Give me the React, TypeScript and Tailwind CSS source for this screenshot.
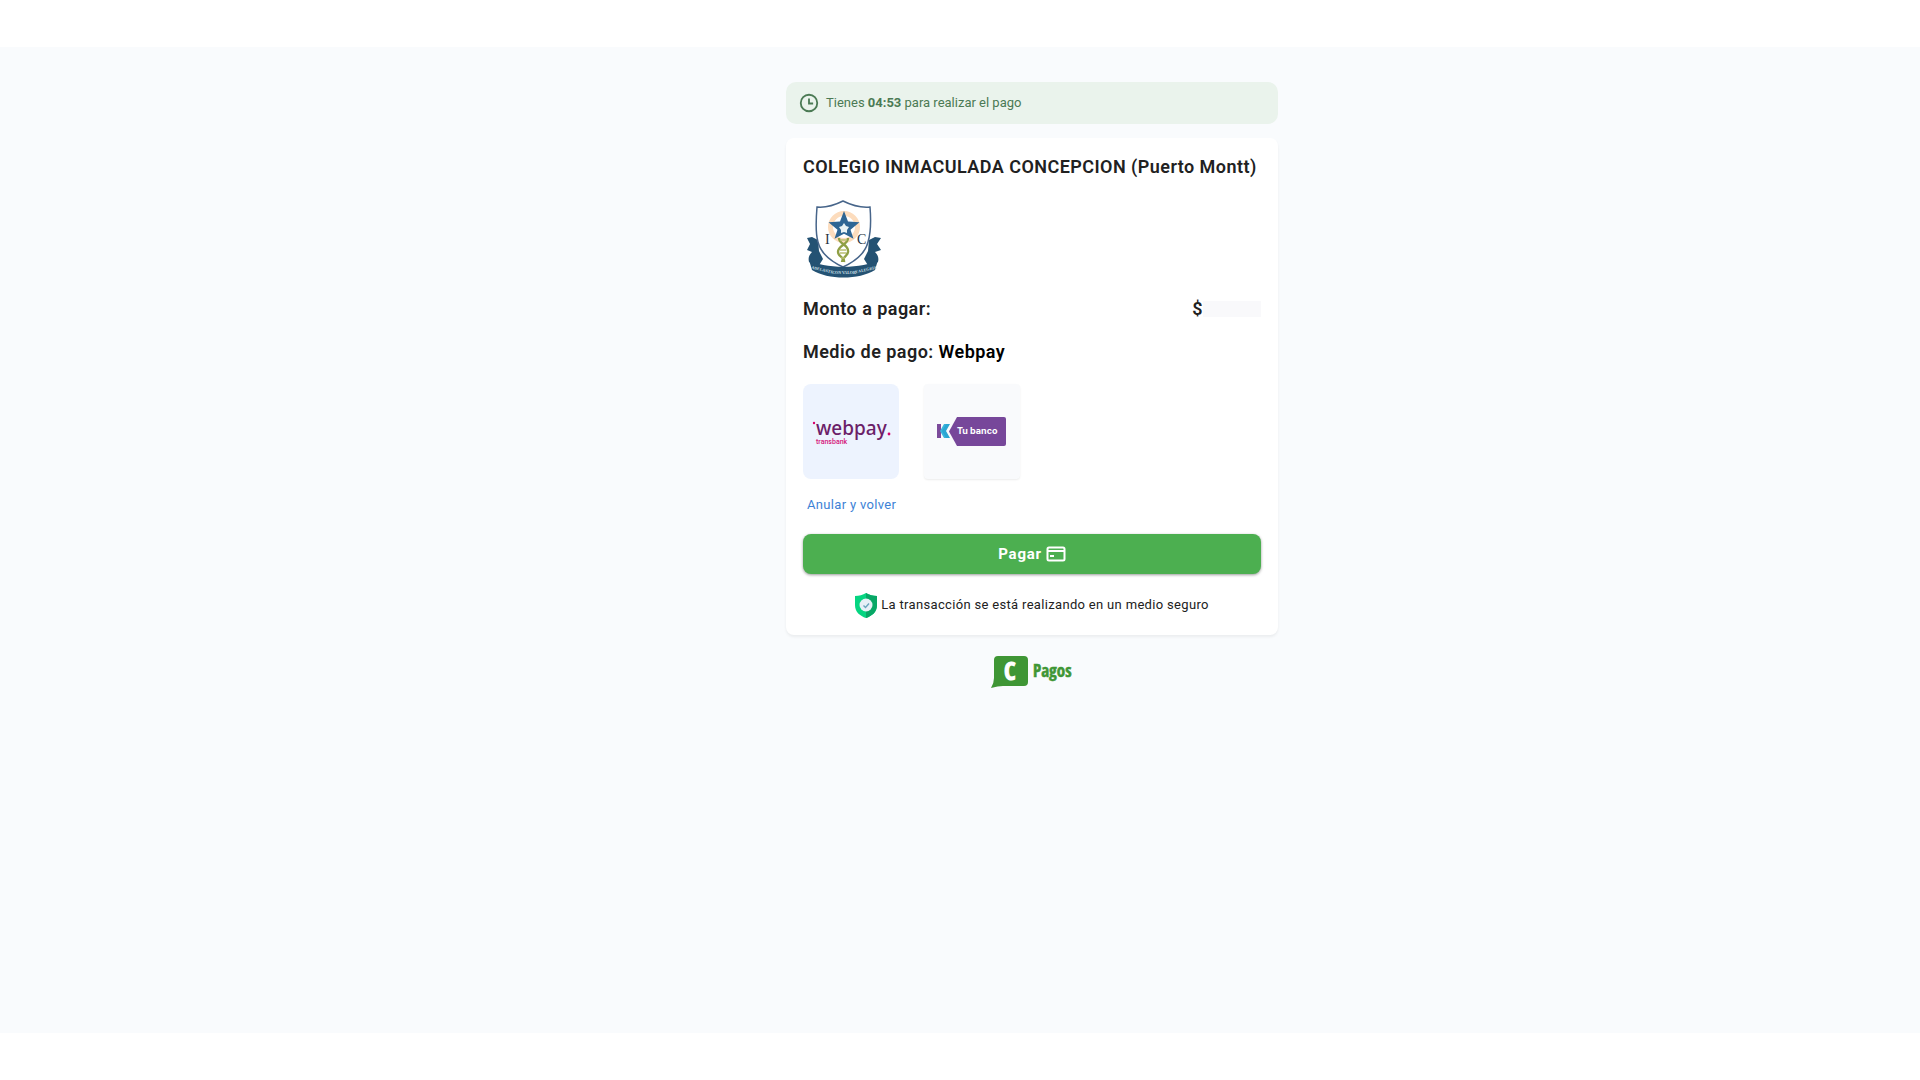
import React, { useState } from "react";

type Method = "Webpay" | "Khipu";

function ClockIcon() {
  return (
    <svg
      viewBox="0 0 24 24"
      fill="none"
      stroke="currentColor"
      strokeWidth="2"
      className="h-[22px] w-[22px] shrink-0"
      aria-hidden="true"
    >
      <circle cx="12" cy="12" r="9" />
      <path d="M12 7v5.500h4.500" />
    </svg>
  );
}

function SchoolCrest() {
  return (
    <svg viewBox="0 0 80 80" className="h-20 w-20" aria-hidden="true">
      {/* Ribbon ends */}
      <path
        d="M15 40 9 37l-5 1 3 6-3 6 5 2c-3 3-4 6-3 10l9 5 5-8-4-8z"
        fill="#245273"
      />
      <path
        d="M66 40l6-3 6 1-4 6 4 6-6 2c3 3 4 6 3 10l-9 5-5-8 4-8z"
        fill="#245273"
      />
      <path
        d="M14 7C24 8 32 5 40 1c8 4 17 7 27 6 1 12 1 25-2 35-3 12-12 19-25 25C27 61 18 54 15 42 12 32 13 19 14 7z"
        fill="#fff"
        stroke="#47658a"
        strokeWidth="1.500"
      />
      <circle cx="41" cy="27" r="13.500" fill="none" stroke="#fcdcbd" strokeWidth="5" />
      <path
        d="m41 11 4 10.500 11.500.8-9 7.500 3 9-9.500-5-9.500 5 3-9-9-7.500 11.500-.8z"
        fill="#2f6694"
      />
      <path d="m41 23 2 3 3 1-2 3v3l-3-1-3 1v-3l-2-3 3-1z" fill="#e9f3f5" />
      <path
        d="M36 38c0 7 10 6 9 14-1 5-6 5-6 10M45 38c0 7-10 7-10 14 0 5 7 5 6 10"
        fill="none"
        stroke="#8f9f45"
        strokeWidth="2.400"
      />
      <path d="M37 40h7M37 50h6M37 53h6M38 58h4" stroke="#b9be72" strokeWidth="1.500" />
      <text
        x="22"
        y="44"
        fill="#27333f"
        fontFamily="Liberation Serif, serif"
        fontSize="14"
      >
        I
      </text>
      <text
        x="54"
        y="44"
        fill="#27333f"
        fontFamily="Liberation Serif, serif"
        fontSize="14"
      >
        C
      </text>
      <path
        d="M6 60c13 9 56 9 69 0l-3 10c-16 10-47 10-63 0z"
        fill="#245273"
      />
      <g
        fill="#d5e2ea"
        fontFamily="Liberation Serif, serif"
        fontSize="4"
        fontWeight="700"
        textAnchor="middle"
      >
        <text x="19" y="71" transform="rotate(13 19 71)">
          ADELANTE
        </text>
        <text x="41" y="74">
          CON VALOR
        </text>
        <text x="63" y="71" transform="rotate(-13 63 71)">
          Y ALEGRIA
        </text>
      </g>
    </svg>
  );
}

function WebpayLogo() {
  return (
    <svg viewBox="0 0 80 40" className="h-10 w-20" aria-hidden="true">
      <circle cx="3" cy="11" r="1.200" fill="#d5006c" />
      <text
        x="5"
        y="23"
        fill="#6b2068"
        fontFamily="Noto Sans, sans-serif"
        fontSize="19"
        fontWeight="500"
      >
        webpay
      </text>
      <circle cx="78" cy="22" r="1.400" fill="#d5006c" />
      <text
        x="5"
        y="32"
        fill="#d5147a"
        fontFamily="Roboto, sans-serif"
        fontSize="7"
        fontWeight="500"
      >
        transbank
      </text>
    </svg>
  );
}

function KhipuLogo() {
  return (
    <svg viewBox="0 0 72 30" className="h-[30px] w-[72px]" aria-hidden="true">
      <path d="M1 7h4v14H1z" fill="#7c4b9b" />
      <path d="M8 7h5l-4 7 4 7H8l-4-7z" fill="#3ab5dc" />
      <path d="M10 7h4l-4 7 4 7h-4l-4-7z" fill="#2aa6d3" />
      <path d="M21 0h47q2 0 2 2v25q0 2-2 2H21l-8-14.500z" fill="#77479a" />
      <text
        x="21"
        y="17"
        fill="#fff"
        fontFamily="Inter, sans-serif"
        fontSize="9"
        fontWeight="700"
      >
        Tu banco
      </text>
    </svg>
  );
}

function CardIcon() {
  return (
    <svg
      viewBox="0 0 20 16"
      fill="none"
      stroke="currentColor"
      strokeWidth="2"
      className="h-4 w-5"
      aria-hidden="true"
    >
      <rect x="1.500" y="1.500" width="17" height="13" rx="1.500" />
      <path d="M1 5h18M4 10h4" />
    </svg>
  );
}

function SecureIcon() {
  return (
    <svg viewBox="0 0 22 25" className="h-[25px] w-[22px]" aria-hidden="true">
      <path
        d="M11 0c3 2 7 3 11 3v9c0 7-5 11-11 13C5 23 0 19 0 12V3c4 0 8-1 11-3z"
        fill="#05d581"
      />
      <path d="M11 0c3 2 7 3 11 3v9c0 7-5 11-11 13z" fill="#08a766" />
      <circle cx="11" cy="12" r="6.500" fill="#e6f0f6" />
      <path
        d="m8.500 12.500 2 2 3.500-4"
        fill="none"
        stroke="#6aa5bd"
        strokeWidth="1.400"
      />
    </svg>
  );
}

function PagosLogo() {
  return (
    <svg
      viewBox="0 -4 82 38"
      className="h-[38px] w-[82px]"
      role="img"
      aria-label="C Pagos"
    >
      <path
        d="M7 1h26q4 0 4 4v22q0 4-4 4H12Q7 31 0 33q3-5 3-10V5q0-4 4-4z"
        fill="#3f9635"
      />
      <text
        x="13"
        y="25"
        fill="#fff"
        stroke="#fff"
        strokeWidth="1"
        fontFamily="Liberation Sans Narrow, Open Sans Condensed, sans-serif"
        fontSize="25"
        fontWeight="700"
      >
        C
      </text>
      <text
        x="42"
        y="22"
        fill="#3f9635"
        stroke="#3f9635"
        strokeWidth="0.500"
        fontFamily="Liberation Sans Narrow, Open Sans Condensed, sans-serif"
        fontSize="17"
        fontWeight="700"
      >
        Pagos
      </text>
    </svg>
  );
}

export default function App() {
  const [method, setMethod] = useState<Method>("Webpay");

  return (
    <div className="min-h-screen bg-white py-[47px] font-['Roboto',sans-serif]">
      <main className="min-h-[calc(100vh-94px)] bg-[#f9fbfd] pt-[35px] pl-36">
        <div className="mx-auto w-full max-w-[492px]">
          {/* Time left */}
          <div
            role="status"
            className="flex h-[42px] items-center gap-1.5 rounded-[10px] bg-[#eaf3ec] px-3 text-[13px] text-[#4b7a54]"
          >
            <ClockIcon />
            <p>
              Tienes <strong className="font-bold">04:53</strong> para realizar
              el pago
            </p>
          </div>

          {/* Payment card */}
          <section className="mt-3.5 rounded-lg bg-white px-[17px] py-[15px] shadow-[0_2px_3px_rgba(0,0,0,0.06)]">
            <h1 className="text-lg leading-7 font-semibold tracking-wide text-[#212121]">
              COLEGIO INMACULADA CONCEPCION (Puerto Montt)
            </h1>

            <div className="mt-[19px]">
              <SchoolCrest />
            </div>

            <div className="mt-[15px] flex items-center justify-between text-lg leading-7 font-semibold tracking-wide text-[#212121]">
              <h2>Monto a pagar:</h2>
              <div className="flex items-center">
                <span>$</span>
                <span className="h-4 w-[58px] bg-[#f9f9fb]" />
              </div>
            </div>

            <h2 className="mt-[15px] text-lg leading-7 font-semibold tracking-wide text-[#212121]">
              Medio de pago: <span className="text-black">{method}</span>
            </h2>

            <div className="mt-[18px] flex gap-[25px]">
              <button
                type="button"
                aria-label="Webpay"
                aria-pressed={method === "Webpay"}
                onClick={() => setMethod("Webpay")}
                className="flex h-[95px] w-24 cursor-pointer items-center justify-center rounded-lg bg-[#edf3fe]"
              >
                <WebpayLogo />
              </button>
              <button
                type="button"
                aria-label="Khipu"
                aria-pressed={method === "Khipu"}
                onClick={() => setMethod("Khipu")}
                className="flex h-[95px] w-24 cursor-pointer items-center justify-center rounded-sm bg-[#f9fafc] shadow-[0_1px_2px_rgba(0,0,0,0.08)]"
              >
                <KhipuLogo />
              </button>
            </div>

            <div className="mt-4 flex px-1">
              <a
                href="#"
                className="text-[13px] leading-5 tracking-wide text-[#3d82d6]"
              >
                Anular y volver
              </a>
            </div>

            <button
              type="button"
              className="mt-[19px] flex h-10 w-full cursor-pointer items-center justify-center gap-1 rounded-lg bg-[#4caf50] text-[15px] font-bold tracking-wider text-white shadow-[0_1px_3px_rgba(0,0,0,0.4)]"
            >
              Pagar
              <CardIcon />
            </button>

            <div className="mt-4 flex h-[30px] items-center justify-center gap-1 text-[13px] tracking-wide text-[#212121]">
              <SecureIcon />
              <p>La transacción se está realizando en un medio seguro</p>
            </div>
          </section>

          <footer className="mt-4 flex justify-center">
            <PagosLogo />
          </footer>
        </div>
      </main>
    </div>
  );
}
